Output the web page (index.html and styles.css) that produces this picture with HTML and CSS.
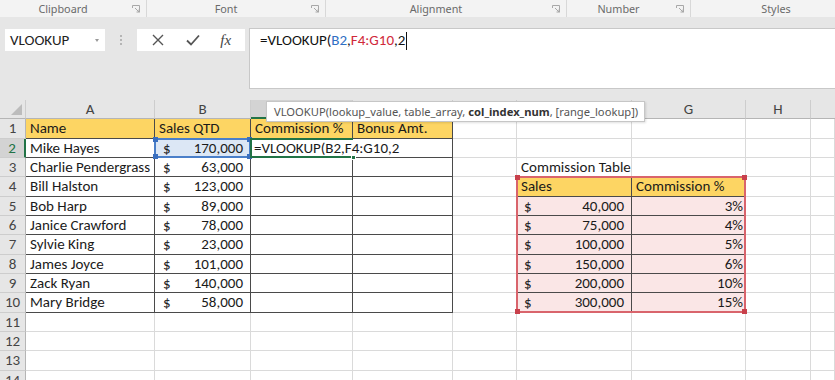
FILE: index.html
```html
<!DOCTYPE html>
<html>
<head>
<meta charset="utf-8">
<link rel="stylesheet" href="styles.css">
</head>
<body>
<div class="ribbon">
  <div class="group g-clip"><span class="label">Clipboard</span><span class="launcher"><svg width="8" height="8" viewBox="0 0 8 8"><path d="M0.5 0.5H7.5V7.5M0.5 0.5V3M3 3L7 7M4.5 7H7V4.5" fill="none" stroke="#a8a8a8" stroke-width="1"/></svg></span></div>
  <div class="group g-font"><span class="label">Font</span><span class="launcher"><svg width="8" height="8" viewBox="0 0 8 8"><path d="M0.5 0.5H7.5V7.5M0.5 0.5V3M3 3L7 7M4.5 7H7V4.5" fill="none" stroke="#a8a8a8" stroke-width="1"/></svg></span></div>
  <div class="group g-align"><span class="label">Alignment</span><span class="launcher"><svg width="8" height="8" viewBox="0 0 8 8"><path d="M0.5 0.5H7.5V7.5M0.5 0.5V3M3 3L7 7M4.5 7H7V4.5" fill="none" stroke="#a8a8a8" stroke-width="1"/></svg></span></div>
  <div class="group g-num"><span class="label">Number</span><span class="launcher"><svg width="8" height="8" viewBox="0 0 8 8"><path d="M0.5 0.5H7.5V7.5M0.5 0.5V3M3 3L7 7M4.5 7H7V4.5" fill="none" stroke="#a8a8a8" stroke-width="1"/></svg></span></div>
  <div class="group g-styles"><span class="label">Styles</span></div>
</div>

<div class="formula-area">
  <div class="namebox"><span>VLOOKUP</span><span class="dd"></span></div>
  <div class="grip"><span class="dots"></span></div>
  <div class="fbtns">
    <svg class="ic" width="14" height="14" viewBox="0 0 14 14"><path d="M2 2L12 12M12 2L2 12" stroke="#555" stroke-width="1.4" fill="none"/></svg>
    <svg class="ic" width="16" height="14" viewBox="0 0 16 14"><path d="M2 7.5L6 11.5L14 2.5" stroke="#555" stroke-width="1.8" fill="none"/></svg>
    <span class="fx">fx</span>
  </div>
  <div class="fbox"><span>=VLOOKUP(</span><span class="ref-b">B2</span><span>,</span><span class="ref-r">F4:G10</span><span>,2</span><span class="caret"></span></div>
</div>

<div class="sheet">
  <div class="h corner"><span class="tri"></span></div>
  <div class="h">A</div><div class="h">B</div><div class="h hsel">C</div><div class="h">D</div><div class="h">E</div><div class="h">F</div><div class="h">G</div><div class="h">H</div><div class="h hlast"></div>

  <div class="rh">1</div>
  <div class="c t y">Name</div><div class="c t y">Sales QTD</div><div class="c t y">Commission %</div><div class="c t y">Bonus Amt.</div><div class="c"></div><div class="c"></div><div class="c"></div><div class="c"></div><div class="c"></div>

  <div class="rh rsel">2</div>
  <div class="c t">Mike Hayes</div><div class="c t bsel num"><span>$</span><span>170,000</span></div><div class="c t edit"><span class="etext">=VLOOKUP(B2,F4:G10,2</span></div><div class="c t"></div><div class="c"></div><div class="c"></div><div class="c"></div><div class="c"></div><div class="c"></div>

  <div class="rh">3</div>
  <div class="c t">Charlie Pendergrass</div><div class="c t num"><span>$</span><span>63,000</span></div><div class="c t"></div><div class="c t"></div><div class="c"></div><div class="c">Commission Table</div><div class="c"></div><div class="c"></div><div class="c"></div>

  <div class="rh">4</div>
  <div class="c t">Bill Halston</div><div class="c t num"><span>$</span><span>123,000</span></div><div class="c t"></div><div class="c t"></div><div class="c"></div><div class="c t y">Sales</div><div class="c t y">Commission %</div><div class="c"></div><div class="c"></div>

  <div class="rh">5</div>
  <div class="c t">Bob Harp</div><div class="c t num"><span>$</span><span>89,000</span></div><div class="c t"></div><div class="c t"></div><div class="c"></div><div class="c t p num fnum"><span>$</span><span>40,000</span></div><div class="c t p pct">3%</div><div class="c"></div><div class="c"></div>

  <div class="rh">6</div>
  <div class="c t">Janice Crawford</div><div class="c t num"><span>$</span><span>78,000</span></div><div class="c t"></div><div class="c t"></div><div class="c"></div><div class="c t p num fnum"><span>$</span><span>75,000</span></div><div class="c t p pct">4%</div><div class="c"></div><div class="c"></div>

  <div class="rh">7</div>
  <div class="c t">Sylvie King</div><div class="c t num"><span>$</span><span>23,000</span></div><div class="c t"></div><div class="c t"></div><div class="c"></div><div class="c t p num fnum"><span>$</span><span>100,000</span></div><div class="c t p pct">5%</div><div class="c"></div><div class="c"></div>

  <div class="rh">8</div>
  <div class="c t">James Joyce</div><div class="c t num"><span>$</span><span>101,000</span></div><div class="c t"></div><div class="c t"></div><div class="c"></div><div class="c t p num fnum"><span>$</span><span>150,000</span></div><div class="c t p pct">6%</div><div class="c"></div><div class="c"></div>

  <div class="rh">9</div>
  <div class="c t">Zack Ryan</div><div class="c t num"><span>$</span><span>140,000</span></div><div class="c t"></div><div class="c t"></div><div class="c"></div><div class="c t p num fnum"><span>$</span><span>200,000</span></div><div class="c t p pct">10%</div><div class="c"></div><div class="c"></div>

  <div class="rh">10</div>
  <div class="c t">Mary Bridge</div><div class="c t num"><span>$</span><span>58,000</span></div><div class="c t"></div><div class="c t"></div><div class="c"></div><div class="c t p num fnum"><span>$</span><span>300,000</span></div><div class="c t p pct">15%</div><div class="c"></div><div class="c"></div>

  <div class="rh">11</div>
  <div class="c"></div><div class="c"></div><div class="c"></div><div class="c"></div><div class="c"></div><div class="c"></div><div class="c"></div><div class="c"></div><div class="c"></div>
  <div class="rh">12</div>
  <div class="c"></div><div class="c"></div><div class="c"></div><div class="c"></div><div class="c"></div><div class="c"></div><div class="c"></div><div class="c"></div><div class="c"></div>
  <div class="rh">13</div>
  <div class="c"></div><div class="c"></div><div class="c"></div><div class="c"></div><div class="c"></div><div class="c"></div><div class="c"></div><div class="c"></div><div class="c"></div>
  <div class="rh">14</div>
  <div class="c"></div><div class="c"></div><div class="c"></div><div class="c"></div><div class="c"></div><div class="c"></div><div class="c"></div><div class="c"></div><div class="c"></div>

  <div class="range range-blue"><i class="k tl"></i><i class="k tr"></i><i class="k bl"></i><i class="k br"></i></div>
  <div class="range range-red"><i class="k tl"></i><i class="k tr"></i><i class="k bl"></i><i class="k br"></i></div>
  <div class="active"><i class="handle"></i></div>

  <div class="tooltip">VLOOKUP(lookup_value, table_array, <b>col_index_num</b>, [range_lookup])</div>
</div>
</body>
</html>
```

FILE: styles.css
```css
* { box-sizing: border-box; }

body {
  margin: 0;
  width: 835px;
  height: 380px;
  overflow: hidden;
  background: #e6e6e6;
  font-family: "Carlito", "Lato", sans-serif;
}

/* ribbon group labels */
.ribbon {
  display: flex;
  height: 17px;
  background: #f3f3f3;
  font-family: "Noto Sans", sans-serif;
  font-size: 10.8px;
  color: #6a6a6a;
  overflow: hidden;
}
.group {
  display: flex;
  flex-shrink: 0;
  align-items: center;
  height: 17px;
  border-right: 1px solid #d8d8d8;
}
.group .label { flex: 1; text-align: center; line-height: 17px; }
.launcher { width: 20px; display: flex; justify-content: center; align-items: center; }
.g-clip { width: 147px; }
.g-font { width: 179px; }
.g-align { width: 241px; }
.g-num { width: 124px; }
.g-styles { width: 170px; border-right: none; }

/* formula bar */
.formula-area {
  display: flex;
  align-items: flex-start;
  height: 83px;
}
.namebox {
  margin: 12px 0 0 5px;
  width: 100px;
  height: 22px;
  background: #fff;
  display: flex;
  align-items: center;
  justify-content: space-between;
  padding: 0 6px 0 5px;
  font-size: 15px;
  color: #222;
}
.dd {
  width: 0; height: 0;
  border-left: 2.5px solid transparent;
  border-right: 2.5px solid transparent;
  border-top: 3px solid #999;
}
.grip {
  width: 32px;
  height: 22px;
  margin-top: 12px;
  display: flex;
  justify-content: center;
  align-items: center;
}
.dots {
  width: 2px;
  height: 13px;
  background: radial-gradient(circle, #b5b5b5 0.8px, transparent 1px) 0 0 / 2px 4px repeat-y;
}
.fbtns {
  margin-top: 12px;
  width: 108px;
  height: 22px;
  background: #fff;
  display: flex;
  align-items: center;
  justify-content: space-around;
  padding: 0 4px;
}
.fx {
  font-family: "Liberation Serif", serif;
  font-style: italic;
  font-size: 15px;
  color: #444;
}
.fbox {
  margin: 11px 0 0 4px;
  flex: 1;
  height: 61px;
  background: #fff;
  border: 1px solid #c8c8c8;
  border-right: none;
  padding: 1px 0 0 10px;
  font-size: 15px;
  line-height: 21px;
  color: #111;
  display: flex;
  align-items: flex-start;
}
.ref-b { color: #2f6fc4; }
.ref-r { color: #d0283a; }
.caret { width: 1px; height: 18px; background: #111; margin-top: 2px; margin-left: 1px; }

/* sheet grid */
.sheet {
  position: relative;
  display: grid;
  grid-template-columns: 26px 129px 96px 102px 100px 64px 115px 114px 65px 1fr;
  grid-template-rows: repeat(15, 19.33px);
  background: #fff;
  font-size: 15px;
  color: #1a1a1a;
}
.h {
  background: #e6e6e6;
  border-right: 1px solid #cdcdcd;
  border-bottom: 1px solid #b5b5b5;
  text-align: center;
  line-height: 19px;
  color: #444;
}
.hlast { border-right: none; }
.hsel { background: #d3d3d3; border-bottom: 2px solid #217346; color: #217346; }
.corner { position: relative; }
.tri {
  position: absolute;
  right: 3px; bottom: 3px;
  width: 0; height: 0;
  border-left: 11px solid transparent;
  border-bottom: 11px solid #bcbcbc;
}
.rh {
  background: #e6e6e6;
  border-right: 1px solid #b5b5b5;
  border-bottom: 1px solid #cdcdcd;
  text-align: center;
  line-height: 19px;
  color: #444;
}
.rsel { background: #d3d3d3; color: #217346; border-right: 2px solid #217346; }

.c {
  border-right: 1px solid #dadada;
  border-bottom: 1px solid #dadada;
  padding: 0 4px;
  line-height: 19px;
  white-space: nowrap;
  overflow: visible;
}
.t { border-right-color: #4a4a4a; border-bottom-color: #4a4a4a; }
.y { background: #fdd563; }
.p { background: #fae6e6; }
.bsel { background: #dce7f5; }
.num { display: flex; justify-content: space-between; padding: 0 7px 0 8px; }
.fnum { padding: 0 7px 0 7px; }
.pct { text-align: right; padding-right: 2px; }

.edit { border-right: none; padding-left: 3px; }

/* range highlights (overlays placed on the grid areas) */
.range { position: absolute; inset: 0; pointer-events: none; z-index: 4; }
.range-blue {
  grid-column: 3 / 4;
  grid-row: 3 / 4;
  border: 2px solid #4a7fc9;
  margin: -1px 0 0 -1px;
}
.range-red {
  grid-column: 7 / 9;
  grid-row: 5 / 12;
  border: 2px solid #d9646c;
  margin: -1px 0 0 -1px;
}
.k { position: absolute; width: 5px; height: 5px; }
.range-blue .k { background: #3a6fbf; }
.range-red .k { background: #c8404b; }
.tl { left: -3px; top: -3px; }
.tr { right: -3px; top: -3px; }
.bl { left: -3px; bottom: -3px; }
.br { right: -3px; bottom: -3px; }

.active {
  position: absolute;
  inset: 0;
  grid-column: 4 / 5;
  grid-row: 3 / 4;
  margin: -1px 0 0 -1px;
  border: 2px solid #217346;
  border-right: none;
  pointer-events: none;
  z-index: 5;
}
.handle {
  position: absolute;
  right: -3px; bottom: -4px;
  width: 5px; height: 5px;
  background: #217346;
  border: 1px solid #fff;
}

.tooltip {
  position: absolute;
  top: 1px;
  left: 266px;
  width: 379px;
  height: 21px;
  background: #fff;
  border: 1px solid #c6c6c6;
  box-shadow: 1px 1px 2px rgba(0, 0, 0, 0.12);
  padding-left: 7px;
  font-family: "Noto Sans", sans-serif;
  font-size: 11.2px;
  line-height: 19px;
  color: #555;
  white-space: nowrap;
  z-index: 10;
}
.tooltip b { color: #333; }
```
